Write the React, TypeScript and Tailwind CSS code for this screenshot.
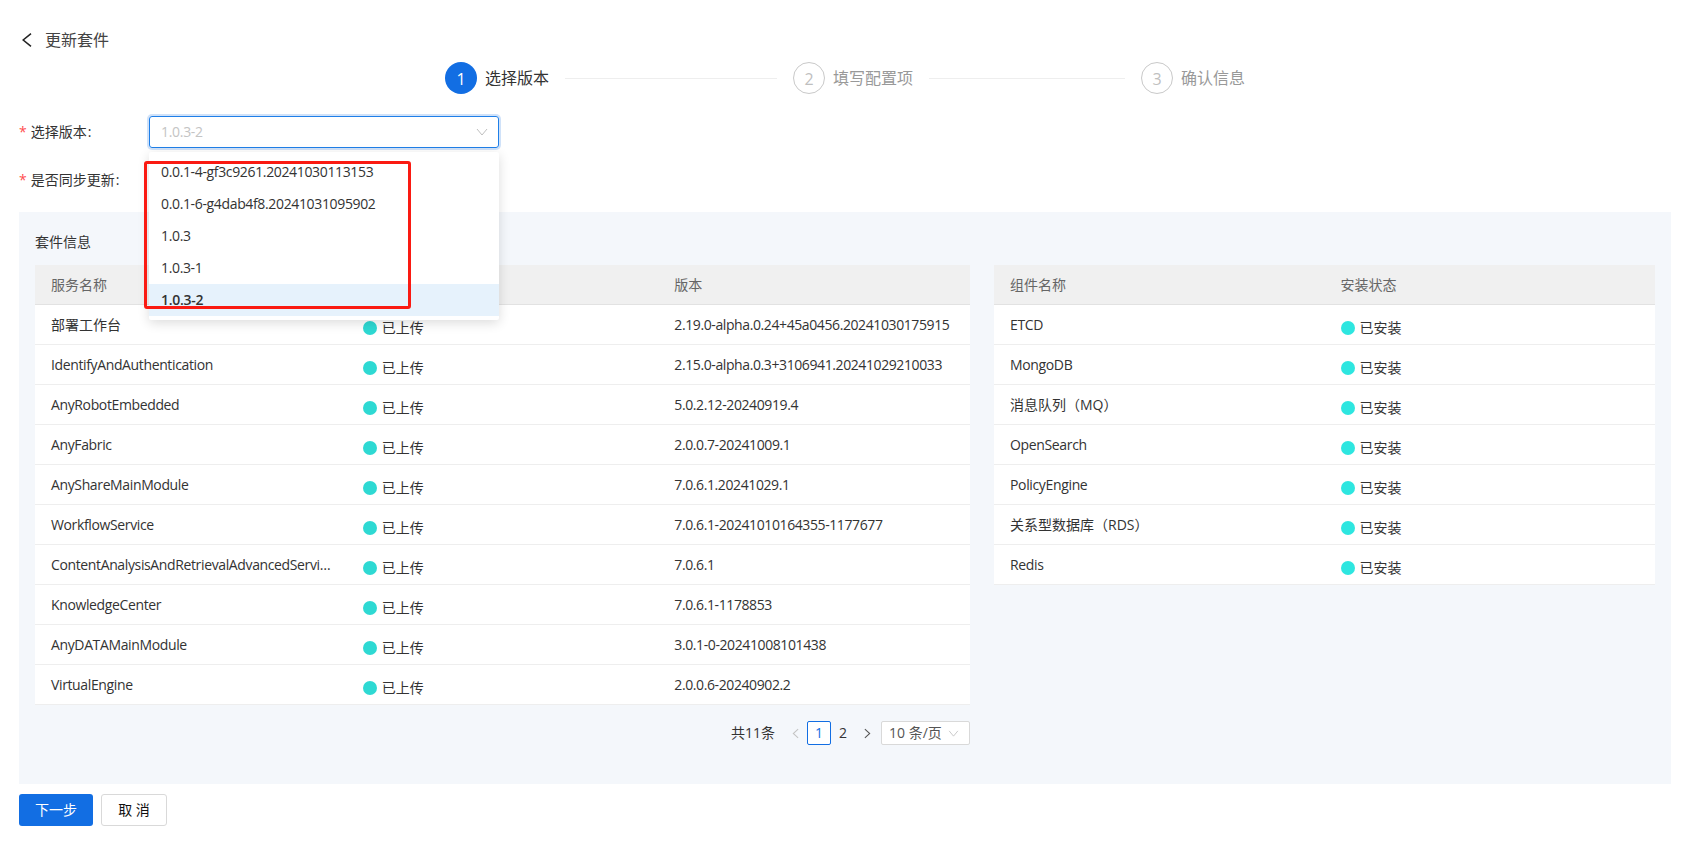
import React from "react";

const services: [string, string][] = [
  ["部署工作台", "2.19.0-alpha.0.24+45a0456.20241030175915"],
  ["IdentifyAndAuthentication", "2.15.0-alpha.0.3+3106941.20241029210033"],
  ["AnyRobotEmbedded", "5.0.2.12-20240919.4"],
  ["AnyFabric", "2.0.0.7-20241009.1"],
  ["AnyShareMainModule", "7.0.6.1.20241029.1"],
  ["WorkflowService", "7.0.6.1-20241010164355-1177677"],
  ["ContentAnalysisAndRetrievalAdvancedService", "7.0.6.1"],
  ["KnowledgeCenter", "7.0.6.1-1178853"],
  ["AnyDATAMainModule", "3.0.1-0-20241008101438"],
  ["VirtualEngine", "2.0.0.6-20240902.2"],
];

const components = ["ETCD", "MongoDB", "消息队列（MQ）", "OpenSearch", "PolicyEngine", "关系型数据库（RDS）", "Redis"];

const options = ["0.0.1-4-gf3c9261.20241030113153", "0.0.1-6-g4dab4f8.20241031095902", "1.0.3", "1.0.3-1", "1.0.3-2"];

const isLatin = (s: string) => /^[\x00-\x7f]+$/.test(s);

function Status({ text, color }: { text: string; color: string }) {
  return (
    <div className="flex items-center gap-[5px] pt-[6px]">
      <span className="h-[14px] w-[14px] rounded-full" style={{ backgroundColor: color }} />
      <span className="text-[#333]">{text}</span>
    </div>
  );
}

function Chevron({ className }: { className: string }) {
  return (
    <svg viewBox="0 0 12 8" className={className} fill="none" stroke="currentColor" strokeWidth="1">
      <path d="M1 1 6 7 11 1" />
    </svg>
  );
}

function Step({ n, label, active }: { n: number; label: string; active?: boolean }) {
  return (
    <div className="flex shrink-0 items-center gap-2">
      <div
        className={
          active
            ? "flex h-8 w-8 items-center justify-center rounded-full bg-[#126ee3] pt-[2px] text-base text-white"
            : "flex h-8 w-8 items-center justify-center rounded-full border border-[#c9c9c9] pt-[2px] text-base text-[#bfbfbf]"
        }
      >
        {n}
      </div>
      <span className={active ? "text-base text-[#333]" : "text-base text-[#999]"}>{label}</span>
    </div>
  );
}

export default function App() {
  return (
    <div
      className="relative h-[844px] w-[1684px] overflow-hidden bg-white pl-[19px] pt-7 text-sm text-[#333]"
      style={{ fontFamily: '"Open Sans","Noto Sans CJK SC",sans-serif' }}
    >
      <div className="flex h-6 items-center">
        <svg viewBox="0 0 10 14" className="ml-[3px] h-[14px] w-[10px] text-[#222]" fill="none" stroke="currentColor" strokeWidth="1.5">
          <path d="M9 0.7 1.2 7 9 13.3" />
        </svg>
        <span className="ml-[13px] text-base text-[#444]">更新套件</span>
      </div>

      <div className="mt-[10px] ml-[426px] flex w-[800px] items-center">
        <Step n={1} label="选择版本" active />
        <div className="mx-4 h-px w-[212px] bg-[#eeeeee]" />
        <Step n={2} label="填写配置项" />
        <div className="mx-4 h-px w-[196px] bg-[#eeeeee]" />
        <Step n={3} label="确认信息" />
      </div>

      <div className="mt-[22px] flex h-8 items-center">
        <div className="w-[130px] text-[#333]">
          <span className="mr-[4px] text-[#ff4d4f]">*</span>选择版本<span className="ml-[1px]">:</span>
        </div>
        <div className="flex h-8 w-[350px] items-center justify-between rounded-[3px] border border-[#1f7fe8] pl-[11px] pr-[10px] text-[#c4c4c4] shadow-[0_0_0_2px_rgba(18,110,227,0.2)]">
          <span className="tracking-[-0.3px]">1.0.3-2</span>
          <Chevron className="h-2 w-3 text-[#bfbfbf]" />
        </div>
      </div>

      <div className="mt-4 flex h-8 items-center">
        <div className="w-[130px] text-[#333]">
          <span className="mr-[4px] text-[#ff4d4f]">*</span>是否同步更新<span className="ml-[1px]">:</span>
        </div>
      </div>

      <div className="mt-4 h-[572px] w-[1652px] bg-[#f4f7fb] px-4">
        <div className="flex h-[53px] items-center pt-[7px] text-[#333]">套件信息</div>
        <div className="flex items-start gap-6">
          <div className="w-[935px]">
            <div className="bg-white">
              <div className="grid h-10 grid-cols-3 items-center border-b border-[#e2e2e2] bg-[#f0f0f0] text-[#666]">
                <div className="px-4">服务名称</div>
                <div className="px-4">上传状态</div>
                <div className="px-4">版本</div>
              </div>
              {services.map(([name, version]) => (
                <div key={name} className="grid h-10 grid-cols-3 items-center border-b border-[#eeeeee]">
                  <div className={isLatin(name) ? "truncate px-4 tracking-[-0.37px]" : "truncate px-4"}>{name}</div>
                  <div className="px-4">
                    <Status text="已上传" color="#2ed9d3" />
                  </div>
                  <div className="whitespace-nowrap px-4 tracking-[-0.4px]">{version}</div>
                </div>
              ))}
            </div>
            <div className="mt-4 flex h-6 items-center justify-end">
              <span className="text-[#333]">共11条</span>
              <svg viewBox="0 0 8 12" className="ml-[17px] h-[11px] w-[7px] text-[#c4c4c4]" fill="none" stroke="currentColor" strokeWidth="1.2">
                <path d="M7 1 1.5 6 7 11" />
              </svg>
              <div className="ml-[8px] flex h-6 w-6 items-center justify-center rounded-[2px] border border-[#126ee3] bg-white text-[#126ee3]">1</div>
              <div className="flex h-6 w-6 items-center justify-center">2</div>
              <svg viewBox="0 0 8 12" className="ml-[9px] h-[11px] w-[7px] text-[#555]" fill="none" stroke="currentColor" strokeWidth="1.2">
                <path d="M1 1 6.5 6 1 11" />
              </svg>
              <div className="ml-[10px] flex h-6 w-[89px] items-center justify-between rounded-[2px] border border-[#d9d9d9] bg-white pl-[7px] pr-[10px] text-[#555]">
                <span>10 条/页</span>
                <Chevron className="h-[7px] w-[11px] text-[#c4c4c4]" />
              </div>
            </div>
          </div>

          <div className="w-[661px] bg-white">
            <div className="grid h-10 grid-cols-2 items-center border-b border-[#e2e2e2] bg-[#f0f0f0] text-[#666]">
              <div className="px-4">组件名称</div>
              <div className="px-4">安装状态</div>
            </div>
            {components.map((name) => (
              <div key={name} className="grid h-10 grid-cols-2 items-center border-b border-[#eeeeee]">
                <div className={isLatin(name) ? "px-4 tracking-[-0.35px]" : "px-4"}>{name}</div>
                <div className="px-4">
                  <Status text="已安装" color="#2ee6e0" />
                </div>
              </div>
            ))}
          </div>
        </div>
      </div>

      <div className="mt-[10px] flex gap-2">
        <button className="h-8 w-[74px] rounded-[3px] bg-[#126ee3] text-white">下一步</button>
        <button className="h-8 w-[66px] rounded-[3px] border border-[#d9d9d9] bg-white text-[#111]">取 消</button>
      </div>

      <div className="absolute left-[149px] top-[152px] h-[168px] w-[350px] rounded-[2px] bg-white py-1 shadow-[0_3px_12px_rgba(0,0,0,0.14)]">
        {options.map((o, i) => (
          <div
            key={o}
            className={
              i === 4
                ? "flex h-8 items-center bg-[#e6f2fc] px-3 font-semibold tracking-[-0.3px] text-[#333]"
                : "flex h-8 items-center px-3 tracking-[-0.35px] text-[#333]"
            }
          >
            {o}
          </div>
        ))}
      </div>

      <div className="absolute left-[144px] top-[161px] h-[148px] w-[267px] rounded-[3px] border-[3px] border-[#fa1a12]" />
    </div>
  );
}
